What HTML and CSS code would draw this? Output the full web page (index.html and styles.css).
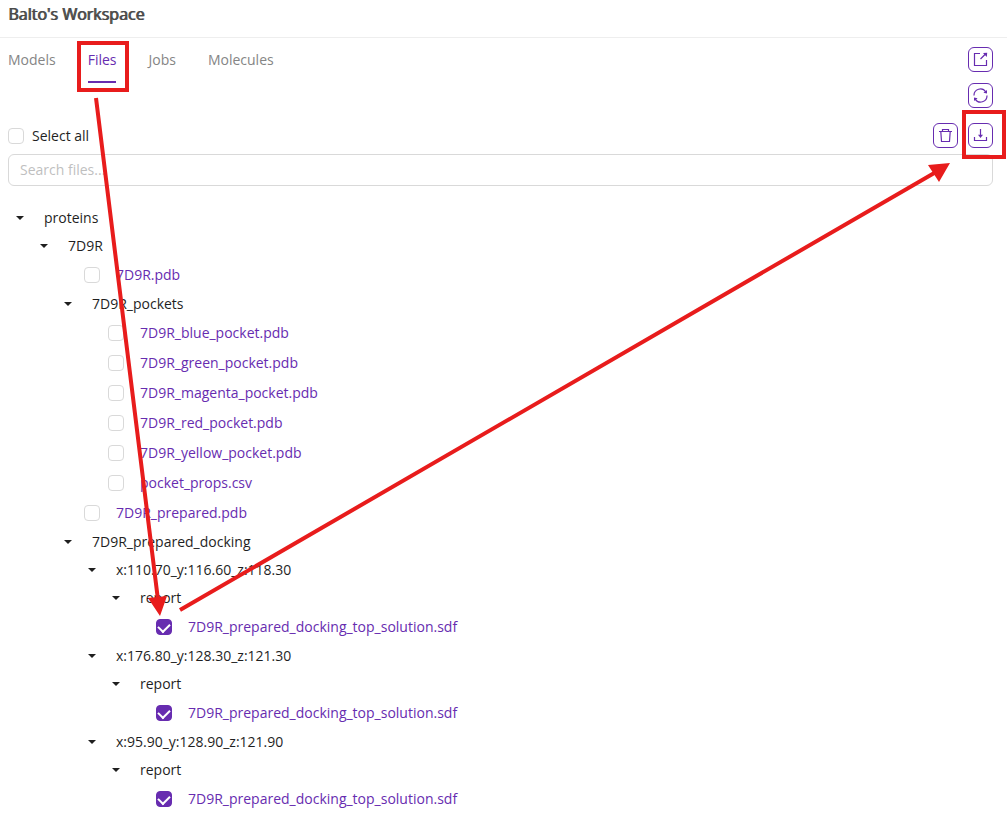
FILE: index.html
```html
<!DOCTYPE html>
<html lang="en">
<head>
<meta charset="utf-8">
<meta name="viewport" content="width=device-width, initial-scale=1">
<title>Balto's Workspace</title>
<link rel="stylesheet" href="styles.css">
</head>
<body>
<header class="header"><h1 class="title">Balto's Workspace</h1></header>
<main class="workspace">
  <div class="topbar">
    <nav class="tabs">
      <a class="tab" href="#models">Models</a>
      <a class="tab tab-active" href="#files" aria-current="page">Files</a>
      <a class="tab" href="#jobs">Jobs</a>
      <a class="tab" href="#molecules">Molecules</a>
    </nav>
    <div class="side-actions">
      <button class="icon-btn" type="button" aria-label="Open in new window">
        <svg viewBox="0 0 15 15"><path d="M7 1.5H1.5v12h12V8M7.5 7L12.5 2"/><path class="solid" d="M10 1l4.2-.3L13.8 5z"/></svg>
      </button>
      <button class="icon-btn" type="button" aria-label="Refresh">
        <svg viewBox="0 0 15 15"><path d="M1 7.5A6.4 6.4 0 0 1 12.8 3.9M14 7.5A6.4 6.4 0 0 1 2.2 11.1"/><path class="solid" d="M14 2v3.6l-3.6-.8zM1 13V9.4l3.6.8z"/></svg>
      </button>
    </div>
  </div>
  <div class="selectbar">
    <label class="select-all"><input class="check" type="checkbox">Select all</label>
    <div class="file-actions">
      <button class="icon-btn" type="button" aria-label="Delete">
        <svg viewBox="0 0 15 15"><path d="M1 3.5h13M4.5 3.5v-2h6v2M2.8 3.5l.7 10h8l.7-10"/></svg>
      </button>
      <button class="icon-btn" type="button" aria-label="Download">
        <svg viewBox="0 0 15 15"><path d="M7.5 1v7M1.5 9v3.5h12V9"/><path class="solid" d="M5 6.8h5L7.5 10z"/></svg>
      </button>
    </div>
  </div>
  <input class="search" type="text" placeholder="Search files..." aria-label="Search files">

  <ul class="tree">
    <li><button class="folder" type="button">proteins</button>
      <ul>
        <li><button class="folder" type="button">7D9R</button>
          <ul>
            <li class="file"><input class="check" type="checkbox" aria-label="7D9R.pdb"><a href="#f1">7D9R.pdb</a></li>
            <li><button class="folder" type="button">7D9R_pockets</button>
              <ul>
                <li class="file"><input class="check" type="checkbox" aria-label="7D9R_blue_pocket.pdb"><a href="#f2">7D9R_blue_pocket.pdb</a></li>
                <li class="file"><input class="check" type="checkbox" aria-label="7D9R_green_pocket.pdb"><a href="#f3">7D9R_green_pocket.pdb</a></li>
                <li class="file"><input class="check" type="checkbox" aria-label="7D9R_magenta_pocket.pdb"><a href="#f4">7D9R_magenta_pocket.pdb</a></li>
                <li class="file"><input class="check" type="checkbox" aria-label="7D9R_red_pocket.pdb"><a href="#f5">7D9R_red_pocket.pdb</a></li>
                <li class="file"><input class="check" type="checkbox" aria-label="7D9R_yellow_pocket.pdb"><a href="#f6">7D9R_yellow_pocket.pdb</a></li>
                <li class="file"><input class="check" type="checkbox" aria-label="pocket_props.csv"><a href="#f7">pocket_props.csv</a></li>
              </ul>
            </li>
            <li class="file"><input class="check" type="checkbox" aria-label="7D9R_prepared.pdb"><a href="#f8">7D9R_prepared.pdb</a></li>
            <li><button class="folder" type="button">7D9R_prepared_docking</button>
              <ul>
                <li><button class="folder" type="button">x:110.70_y:116.60_z:118.30</button>
                  <ul>
                    <li><button class="folder" type="button">report</button>
                      <ul><li class="file"><input class="check" type="checkbox" checked aria-label="Top solution, pocket 1"><a href="#f9">7D9R_prepared_docking_top_solution.sdf</a></li></ul>
                    </li>
                  </ul>
                </li>
                <li><button class="folder" type="button">x:176.80_y:128.30_z:121.30</button>
                  <ul>
                    <li><button class="folder" type="button">report</button>
                      <ul><li class="file"><input class="check" type="checkbox" checked aria-label="Top solution, pocket 2"><a href="#f10">7D9R_prepared_docking_top_solution.sdf</a></li></ul>
                    </li>
                  </ul>
                </li>
                <li><button class="folder" type="button">x:95.90_y:128.90_z:121.90</button>
                  <ul>
                    <li><button class="folder" type="button">report</button>
                      <ul><li class="file"><input class="check" type="checkbox" checked aria-label="Top solution, pocket 3"><a href="#f11">7D9R_prepared_docking_top_solution.sdf</a></li></ul>
                    </li>
                  </ul>
                </li>
              </ul>
            </li>
          </ul>
        </li>
      </ul>
    </li>
  </ul>
</main>
<svg class="callouts" viewBox="0 0 1007 817" aria-hidden="true">
  <rect x="79" y="43" width="48" height="47"/>
  <rect x="964" y="112" width="40" height="45"/>
  <path d="M96 98L158 600M180 610L936 172"/>
  <path class="head" d="M148 598L167 596L160 616zM928 165L950 163L939 182z"/>
</svg>
</body>
</html>
```
FILE: styles.css
```css
:root {
  --accent: #672cb0;
  --line: #d9d9d9;
  --mark: #e81c1c;
}

* { box-sizing: border-box; }

body {
  margin: 0;
  position: relative;
  background: #fff;
  color: #1f1f1f;
  font: 14px/22px "Open Sans", "Noto Sans", sans-serif;
}

button, input { font: inherit; color: inherit; }

.header {
  height: 38px;
  padding: 2px 8px;
  border-bottom: 1px solid #eee;
}

.title {
  margin: 0;
  font-size: 16px;
  line-height: 24px;
  font-weight: 400;
  color: #4a4a4a;
  text-shadow: 1px 0 #4a4a4a;
}

.workspace { padding: 9px 14px 3px 8px; }

.topbar {
  display: flex;
  justify-content: space-between;
  align-items: flex-start;
}

.tabs { display: flex; gap: 32px; }

.tab {
  padding: 2px 0 10px;
  border-bottom: 2px solid transparent;
  color: #858585;
  text-decoration: none;
}

.tab-active {
  color: var(--accent);
  border-color: var(--accent);
}

.side-actions {
  display: flex;
  flex-direction: column;
  gap: 11px;
}

.icon-btn {
  display: grid;
  place-items: center;
  width: 25px;
  height: 25px;
  padding: 0;
  border: 1px solid var(--accent);
  border-radius: 6px;
  background: #fff;
}

.icon-btn svg {
  width: 15px;
  height: 15px;
  fill: none;
  stroke: var(--accent);
  stroke-width: 1.2;
}

.icon-btn .solid { fill: var(--accent); stroke: none; }

.selectbar {
  display: flex;
  justify-content: space-between;
  align-items: center;
  margin: 15px 0 6px;
}

.select-all { display: flex; align-items: center; gap: 8px; }

.file-actions { display: flex; gap: 10px; }

.check {
  appearance: none;
  display: grid;
  place-items: center;
  flex: none;
  width: 16px;
  height: 16px;
  margin: 0;
  border: 1px solid var(--line);
  border-radius: 4px;
  background: #fff;
}

.check:checked { background: var(--accent); border-color: var(--accent); }

.check:checked::after {
  content: "";
  width: 6px;
  height: 9px;
  border: solid #fff;
  border-width: 0 2px 2px 0;
  transform: translateY(-1px) rotate(45deg);
}

.search {
  display: block;
  width: 100%;
  height: 32px;
  padding: 4px 11px 6px;
  border: 1px solid var(--line);
  border-radius: 6px;
  background: #fff;
}

.search::placeholder { color: #bfbfbf; opacity: 1; }

.tree, .tree ul { margin: 0; padding: 0; list-style: none; }
.tree { margin-top: 18px; }
.tree ul { padding-left: 24px; }

.folder {
  display: flex;
  align-items: center;
  gap: 20px;
  height: 28px;
  padding: 0 8px;
  border: 0;
  background: none;
}

.folder::before {
  content: "";
  width: 8px;
  height: 4px;
  background: #1f1f1f;
  clip-path: polygon(0 0, 100% 0, 50% 100%);
}

.file {
  display: flex;
  align-items: center;
  gap: 16px;
  height: 30px;
  padding-left: 28px;
}

.file a { color: var(--accent); text-decoration: none; }

.callouts {
  position: absolute;
  top: 0;
  left: 0;
  width: 100%;
  pointer-events: none;
  fill: none;
  stroke: var(--mark);
  stroke-width: 4;
}

.callouts .head { fill: var(--mark); stroke: none; }
```
